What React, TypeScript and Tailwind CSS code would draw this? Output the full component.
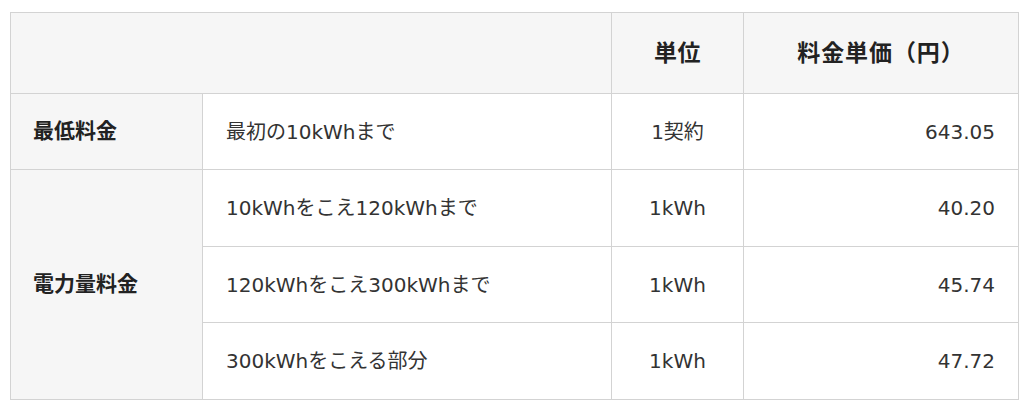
import React from "react";

const font = { fontFamily: '"DejaVu Sans", "Noto Sans CJK JP", sans-serif' };

export default function App() {
  const td = "border border-[#d3d3d3] px-[23px] text-[20px] text-[#333333] align-middle";
  const th = "border border-[#d3d3d3] bg-[#f6f6f6] font-bold text-[#222222] align-middle";
  return (
    <div className="w-[1024px] h-[407px] bg-white pt-[12px] pl-[10px]" style={font}>
      <table className="table-fixed border-collapse w-[1008px]">
        <colgroup>
          <col className="w-[192px]" />
          <col className="w-[409px]" />
          <col className="w-[132px]" />
          <col className="w-[275px]" />
        </colgroup>
        <thead>
          <tr className="h-[81px]">
            <th colSpan={2} className={th}></th>
            <th className={`${th} text-center text-[23px] tracking-[0.02em]`}>単位</th>
            <th className={`${th} text-center text-[23px] tracking-[0.04em]`}>料金単価（円）</th>
          </tr>
        </thead>
        <tbody>
          <tr className="h-[76px]">
            <th className={`${th} text-left px-[22px] text-[21px]`}>最低料金</th>
            <td className={td}>最初の10kWhまで</td>
            <td className={`${td} text-center`}>1契約</td>
            <td className={`${td} text-right`}>643.05</td>
          </tr>
          <tr className="h-[77px]">
            <th rowSpan={3} className={`${th} text-left px-[22px] text-[21px]`}>電力量料金</th>
            <td className={td}>10kWhをこえ120kWhまで</td>
            <td className={`${td} text-center`}>1kWh</td>
            <td className={`${td} text-right`}>40.20</td>
          </tr>
          <tr className="h-[76px]">
            <td className={td}>120kWhをこえ300kWhまで</td>
            <td className={`${td} text-center`}>1kWh</td>
            <td className={`${td} text-right`}>45.74</td>
          </tr>
          <tr className="h-[77px]">
            <td className={td}>300kWhをこえる部分</td>
            <td className={`${td} text-center`}>1kWh</td>
            <td className={`${td} text-right`}>47.72</td>
          </tr>
        </tbody>
      </table>
    </div>
  );
}
